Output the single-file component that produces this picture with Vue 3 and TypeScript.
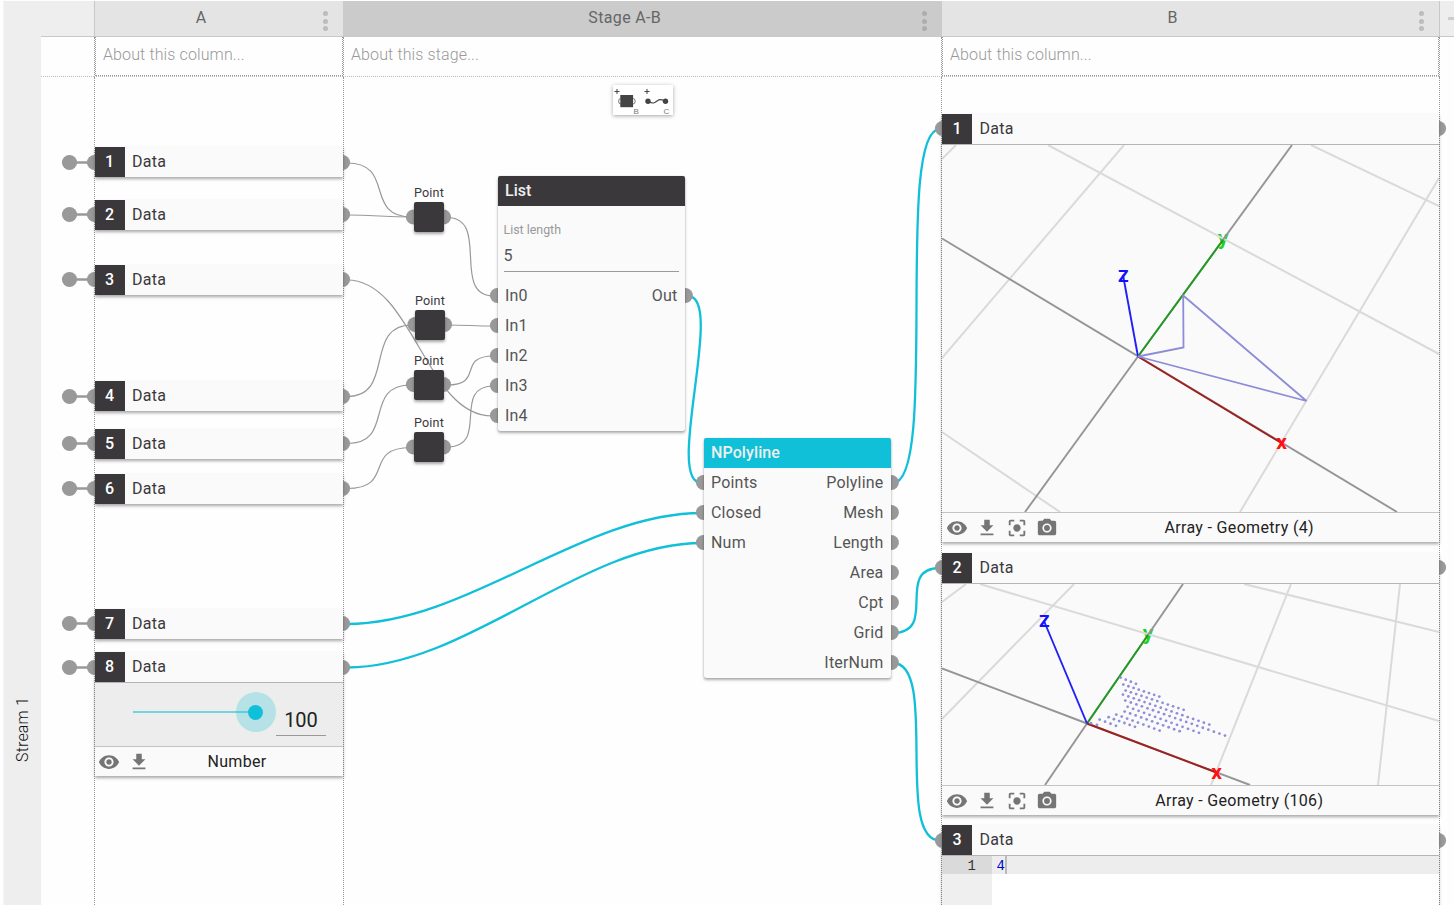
<script setup lang="ts">
interface Wire { from: [number, number]; to: [number, number]; bend: number; active?: boolean }
interface Cell { id: number; gap: number; portY: number; slider?: boolean }
interface Line { a: [number, number]; b: [number, number]; kind: string }

const cells: Cell[] = [
  { id: 1, gap: 70, portY: 162.5 },
  { id: 2, gap: 23, portY: 214.5 },
  { id: 3, gap: 35, portY: 279.5 },
  { id: 4, gap: 86, portY: 396.5 },
  { id: 5, gap: 18, portY: 443.5 },
  { id: 6, gap: 15, portY: 488.5 },
  { id: 7, gap: 105, portY: 623.5 },
  { id: 8, gap: 13, portY: 667.5, slider: true },
]

const wires: Wire[] = [
  { from: [347, 163], to: [412, 217], bend: 49 },
  { from: [347, 215], to: [412, 217], bend: 30 },
  { from: [347, 280], to: [492, 416], bend: 66 },
  { from: [347, 396.5], to: [412, 325], bend: 49 },
  { from: [347, 443.5], to: [411, 385], bend: 49 },
  { from: [347, 488.5], to: [411, 447.5], bend: 49 },
  { from: [447, 217.5], to: [494, 296], bend: 44 },
  { from: [447, 325], to: [494, 326], bend: 20 },
  { from: [447, 385], to: [494, 356], bend: 38 },
  { from: [447, 447], to: [494, 386], bend: 44 },
  { from: [688, 296], to: [701.5, 483], bend: 38, active: true },
  { from: [347, 624], to: [702, 513], bend: 120, active: true },
  { from: [347, 667.5], to: [702, 543], bend: 120, active: true },
  { from: [893, 483], to: [940, 129], bend: 46, active: true },
  { from: [893, 633], to: [940, 568], bend: 46, active: true },
  { from: [893, 663], to: [940, 840.5], bend: 46, active: true },
]

const wirePath = (w: Wire): string =>
  `M${w.from[0]} ${w.from[1]} C${w.from[0] + w.bend} ${w.from[1]} ${w.to[0] - w.bend} ${w.to[1]} ${w.to[0]} ${w.to[1]}`

const ports: [number, number][] = [
  ...cells.flatMap((c): [number, number][] => [[69.5, c.portY], [94.5, c.portY], [342.5, c.portY]]),
  [413.5, 217], [443.5, 217],
  [415, 324.5], [444.5, 324.5],
  [413.5, 384.5], [443.5, 384.5],
  [413.5, 447], [443.5, 447],
  ...[0, 1, 2, 3, 4].map((i): [number, number] => [497.5, 295.5 + i * 30]),
  [685.3, 295.5],
  ...[0, 1, 2].map((i): [number, number] => [703.5, 482.5 + i * 30]),
  ...[0, 1, 2, 3, 4, 5, 6].map((i): [number, number] => [891.3, 482.5 + i * 30]),
  ...[128.5, 567.5, 840.5].flatMap((y): [number, number][] => [[942.5, y], [1438.5, y]]),
]

const points = [
  { x: 414, y: 202 },
  { x: 415, y: 310 },
  { x: 414, y: 370 },
  { x: 414, y: 432 },
]

const polyOut = ['Polyline', 'Mesh', 'Length', 'Area', 'Cpt', 'Grid', 'IterNum']
const polyIn = ['Points', 'Closed', 'Num']

const sceneOne: Line[] = [
  { a: [0, 14], b: [14, 0], kind: 'grid' },
  { a: [106, 0], b: [497, 209], kind: 'grid' },
  { a: [182, 0], b: [0, 213], kind: 'grid' },
  { a: [369, 0], b: [497, 61], kind: 'grid' },
  { a: [497, 33], b: [298, 367], kind: 'grid' },
  { a: [0, 287], b: [118, 367], kind: 'grid' },
  { a: [0, 93.5], b: [455, 367], kind: 'main' },
  { a: [350, 0], b: [196, 211.5], kind: 'main' },
  { a: [196, 211.5], b: [83, 367], kind: 'main' },
  { a: [196, 211.5], b: [281, 95], kind: 'y' },
  { a: [196, 211.5], b: [339.5, 298], kind: 'x' },
  { a: [196, 211.5], b: [181, 130], kind: 'z' },
]

const sceneTwo: Line[] = [
  { a: [0, 18], b: [24, 0], kind: 'grid' },
  { a: [38, 0], b: [497, 137], kind: 'grid' },
  { a: [132, 0], b: [0, 135], kind: 'grid' },
  { a: [302, 0], b: [497, 48], kind: 'grid' },
  { a: [349, 0], b: [269, 201], kind: 'grid' },
  { a: [458, 0], b: [436, 201], kind: 'grid' },
  { a: [0, 84.5], b: [145, 139.5], kind: 'main' },
  { a: [145, 139.5], b: [308, 201], kind: 'main' },
  { a: [241, 0], b: [145, 139.5], kind: 'main' },
  { a: [145, 139.5], b: [103, 201], kind: 'main' },
  { a: [145, 139.5], b: [206, 51], kind: 'y' },
  { a: [145, 139.5], b: [274.5, 188.5], kind: 'x' },
  { a: [145, 139.5], b: [102, 37], kind: 'z' },
]

// Each run: first dot, last dot, number of dots.
const runs: [number, number, number, number, number][] = [
  [571, 322, 617, 341, 4],
  [579, 343, 687, 379, 8],
  [586, 361, 760, 419, 12],
  [578, 373, 837, 463, 17],
  [585, 391, 884, 496, 19],
  [592, 410, 806, 488, 14],
  [583, 424, 748, 483, 11],
  [558, 433, 688, 481, 9],
  [535, 441, 614, 470, 6],
  [508, 448, 557, 467, 4],
  [482, 459, 500, 464, 2],
]
const dots = runs.flatMap(([x0, y0, x1, y1, n]) =>
  Array.from({ length: n }, (_, i) => ({
    x: (x0 + ((x1 - x0) * i) / (n - 1)) / 3 - 11.7,
    y: (y0 + ((y1 - y0) * i) / (n - 1)) / 3 - 13.8,
  })),
)

const icons: Record<string, string> = {
  eye: 'M12 4.5C7 4.5 2.73 7.61 1 12c1.73 4.39 6 7.5 11 7.5s9.27-3.11 11-7.5c-1.73-4.39-6-7.5-11-7.5zM12 17c-2.76 0-5-2.24-5-5s2.24-5 5-5 5 2.24 5 5-2.24 5-5 5zm0-8c-1.66 0-3 1.34-3 3s1.34 3 3 3 3-1.34 3-3-1.34-3-3-3z',
  download: 'M19 9h-4V3H9v6H5l7 7 7-7zM5 18v2h14v-2H5z',
  focus: 'M12 8c-2.21 0-4 1.79-4 4s1.79 4 4 4 4-1.79 4-4-1.79-4-4-4zm-7 7H3v4c0 1.1.9 2 2 2h4v-2H5v-4zM5 5h4V3H5c-1.1 0-2 .9-2 2v4h2V5zm14-2h-4v2h4v4h2V5c0-1.1-.9-2-2-2zm0 16h-4v2h4c1.1 0 2-.9 2-2v-4h-2v4z',
  camera: 'M12 8.8a3.2 3.2 0 1 0 0 6.4 3.2 3.2 0 0 0 0-6.4zM9 2L7.17 4H4c-1.1 0-2 .9-2 2v12c0 1.1.9 2 2 2h16c1.1 0 2-.9 2-2V6c0-1.1-.9-2-2-2h-3.17L15 2H9zm3 15c-2.76 0-5-2.24-5-5s2.24-5 5-5 5 2.24 5 5-2.24 5-5 5z',
}
const numberTools = ['eye', 'download']
const geometryTools = ['eye', 'download', 'focus', 'camera']
</script>

<template>
  <div class="app">
    <aside class="stream"><span>Stream 1</span></aside>
    <main class="sheet">
      <header class="heads">
        <div class="gutter"></div>
        <div class="head col-a"><span>A</span><i class="menu"><b></b><b></b><b></b></i></div>
        <div class="head stage-head"><span>Stage A-B</span><i class="menu"><b></b><b></b><b></b></i></div>
        <div class="head col-b"><span>B</span><i class="menu"><b></b><b></b><b></b></i></div>
        <div class="tail"><i></i></div>
      </header>

      <section class="abouts">
        <div class="gutter"></div>
        <div class="col-a"><p class="boxed">About this column...</p></div>
        <div class="stage"><p>About this stage...</p></div>
        <div class="col-b"><p class="boxed">About this column...</p></div>
        <div class="rest"></div>
      </section>

      <section class="board">
        <div class="gutter"></div>
        <div class="col-a">
          <article v-for="c in cells" :key="c.id" class="card" :style="{ marginTop: c.gap + 'px' }">
            <div class="title"><b>{{ c.id }}</b><span>Data</span></div>
            <template v-if="c.slider">
              <div class="slider">
                <div class="track"><i class="halo"><i class="thumb"></i></i></div>
                <div class="value">100</div>
              </div>
              <footer class="foot narrow">
                <svg v-for="n in numberTools" :key="n" viewBox="0 0 24 24"><path :d="icons[n]" /></svg>
                <span>Number</span>
              </footer>
            </template>
          </article>
        </div>
        <div class="stage"></div>
        <div class="col-b">
          <article class="card first">
            <div class="title"><b>1</b><span>Data</span></div>
            <svg class="scene tall" viewBox="0 0 497 367">
              <text class="ty" x="281" y="99.8">y</text>
              <line v-for="(l, i) in sceneOne" :key="i" :class="l.kind" :x1="l.a[0]" :y1="l.a[1]" :x2="l.b[0]" :y2="l.b[1]" />
              <path class="shape" d="M196 211.5L241.5 202.5L241.2 150.5L364.5 256Z" />
              <text class="tx" x="339.7" y="304">x</text>
              <text class="tz" x="181.2" y="136.7">z</text>
            </svg>
            <footer class="foot">
              <svg v-for="n in geometryTools" :key="n" viewBox="0 0 24 24"><path :d="icons[n]" /></svg>
              <span>Array - Geometry (4)</span>
            </footer>
          </article>
          <article class="card second">
            <div class="title"><b>2</b><span>Data</span></div>
            <svg class="scene short" viewBox="0 0 497 201">
              <text class="ty" x="206" y="56">y</text>
              <line v-for="(l, i) in sceneTwo" :key="i" :class="l.kind" :x1="l.a[0]" :y1="l.a[1]" :x2="l.b[0]" :y2="l.b[1]" />
              <circle v-for="(d, i) in dots" :key="'d' + i" class="dot" :cx="d.x" :cy="d.y" r="1.4" />
              <text class="tx" x="274.7" y="194.8">x</text>
              <text class="tz" x="102.3" y="42.7">z</text>
            </svg>
            <footer class="foot">
              <svg v-for="n in geometryTools" :key="n" viewBox="0 0 24 24"><path :d="icons[n]" /></svg>
              <span>Array - Geometry (106)</span>
            </footer>
          </article>
          <article class="card third">
            <div class="title"><b>3</b><span>Data</span></div>
            <div class="editor">
              <div class="lines"><span>1</span></div>
              <div class="code"><span>4</span></div>
            </div>
          </article>
        </div>
        <div class="rest"></div>
      </section>
    </main>

    <svg class="wires" viewBox="0 0 1454 905">
      <path v-for="(w, i) in wires" :key="i" :class="{ active: w.active }" :d="wirePath(w)" />
      <line v-for="c in cells" :key="'l' + c.id" x1="70" x2="94" :y1="c.portY" :y2="c.portY" />
      <circle v-for="(p, i) in ports" :key="'p' + i" :cx="p[0]" :cy="p[1]" r="7.6" />
    </svg>

    <div class="toolbar">
      <svg viewBox="0 0 60 30">
        <path class="plus" d="M1.5 6.5h5M4 4v5M31.5 6.5h5M34 4v5" />
        <ellipse class="ring" cx="7.6" cy="16.2" rx="2" ry="2.7" />
        <ellipse class="ring" cx="20.2" cy="16.2" rx="2" ry="2.7" />
        <rect x="7.3" y="10" width="12.8" height="12.2" />
        <circle cx="35" cy="16.2" r="2.7" />
        <circle cx="52.5" cy="16.2" r="2.7" />
        <path class="link" d="M35 16.2C41 19.5 42 17.5 44 16C47 14 48 14.5 52.5 16.2" />
        <text x="20.6" y="29">B</text>
        <text x="50.6" y="29">C</text>
      </svg>
    </div>

    <div v-for="(p, i) in points" :key="i" class="point" :style="{ left: p.x + 'px', top: p.y + 'px' }">
      <span>Point</span>
    </div>

    <section class="node list">
      <h3>List</h3>
      <div class="field"><label>List length</label><span>5</span></div>
      <div v-for="i in 5" :key="i" class="pins"><span>In{{ i - 1 }}</span><span v-if="i === 1">Out</span></div>
    </section>

    <section class="node poly">
      <h3>NPolyline</h3>
      <div v-for="(o, i) in polyOut" :key="o" class="pins"><span>{{ polyIn[i] }}</span><span>{{ o }}</span></div>
    </section>
  </div>
</template>

<style>
body { margin: 0; background: #fff; overflow: hidden; }
</style>

<style scoped>
* { box-sizing: border-box; }
.app {
  position: relative;
  width: 1454px;
  height: 905px;
  overflow: hidden;
  display: flex;
  padding: 1px 0 0 3px;
  background: #fefefe;
  font: 400 16px/20px Roboto, sans-serif;
  color: #3b383b;
}
.stream {
  width: 38px;
  background: #eee;
  border-left: 1px solid #f4f4f4;
  display: flex;
  align-items: flex-end;
  justify-content: center;
  padding-bottom: 143px;
}
.stream span { writing-mode: vertical-rl; transform: rotate(180deg); font-weight: 300; color: #111; letter-spacing: .15px; }
.sheet { flex: 1; display: flex; flex-direction: column; min-width: 0; }
.heads, .abouts, .board { display: flex; }
.heads { height: 36px; background: #eee; }
.gutter { width: 53px; flex: none; }
.col-a { width: 249px; flex: none; }
.stage, .stage-head { width: 599px; flex: none; }
.col-b { width: 497px; flex: none; }
.heads .gutter, .heads .tail { border-bottom: 1px solid #c8c8c8; }
.head {
  display: flex;
  align-items: flex-start;
  padding-top: 7px;
  background: #e4e4e4;
  border-bottom: 1px solid #c8c8c8;
  color: #666;
}
.head.col-a { border-left: 1px solid #c8c8c8; }
.head.stage-head { background: #cbcbcb; }
.head span { flex: 1; text-align: center; letter-spacing: .35px; }
.menu { width: 35.5px; display: flex; flex-direction: column; align-items: center; gap: 2.5px; padding-top: 3px; }
.menu b { width: 5px; height: 5px; border-radius: 50%; background: #bcbcbc; }
.stage-head .menu b { background: #adadad; }
.tail { flex: 1; border-left: 1px solid #c8c8c8; padding: 16px 0 0 8px; }
.tail i { display: block; height: 3px; background: #ccc; }

.abouts { height: 40px; }
.abouts .gutter, .abouts .col-a, .abouts .stage, .abouts .col-b { border-bottom: 1px dotted #bbb; }
.abouts .col-a, .board .col-a { border-left: 1px dotted #999; }
.abouts .stage, .board .stage { border-left: 1px dotted #999; border-right: 1px dotted #999; }
.rest { flex: 1; border-left: 1px dotted #999; }
.abouts p { margin: 0; height: 39px; padding: 8px 8px 0 7px; font-weight: 300; color: #999; letter-spacing: .12px; }
.abouts .boxed { border: 1px dotted #999; border-top: 0; }
.board { flex: 1; min-height: 0; }

.card { position: relative; z-index: 1; background: #fafafa; box-shadow: 0 2px 3px rgba(0, 0, 0, .34); }
.title { height: 30px; display: flex; align-items: center; }
.title b { width: 30px; height: 30px; background: #3b383b; color: #fff; font-weight: 500; text-align: center; line-height: 29px; padding-right: 1px; }
.col-b .title b { padding-right: 0; }
.title span { padding-left: 7px; line-height: 29px; height: 30px; letter-spacing: .25px; }
.col-b .title span { padding-left: 7.5px; }
.first { margin-top: 37px; }
.second { margin-top: 11px; }
.third { margin-top: 10px; height: 120px; background: #fff; }
.third .title { background: #fafafa; }
.foot { display: flex; height: 30px; border-top: 1px solid #c4c4c4; padding-right: 22.5px; align-items: center; }
.foot svg { width: 22px; height: 22px; margin: 1px 4px 0; fill: #757575; }
.foot.narrow { padding-right: 24px; }
.foot.narrow svg { margin: 1px 4.6px 0 3.4px; }
.foot span { flex: 1; text-align: center; color: #222; letter-spacing: .33px; }
.slider { display: flex; height: 64px; border-top: 1px solid #b4b4b4; background: #ededed; padding-left: 38px; }
.track { position: relative; width: 123px; height: 2px; margin-top: 28px; background: #74d3de; }
.halo { position: absolute; right: -20px; top: -19px; width: 40px; height: 40px; border-radius: 50%; background: rgba(16, 192, 216, .25); }
.thumb { position: absolute; left: 12px; top: 13px; width: 15px; height: 15px; border-radius: 50%; background: #10c0d8; }
.value { width: 50px; height: 27px; margin: 26px 0 0 20px; border-bottom: 1px solid #999; text-align: center; font-size: 20px; line-height: 23px; color: #222; }

.scene { display: block; width: 497px; box-sizing: content-box; border-top: 1px solid #b4b4b4; }
.tall { height: 367px; }
.short { height: 201px; }
.scene line { stroke-width: 1.9; }
.grid { stroke: #dadada; }
.scene .grid { stroke-width: 2; }
.main { stroke: #959595; }
.x { stroke: #a02020; }
.y { stroke: #209a20; }
.z { stroke: #2020f8; }
.shape { fill: none; stroke: #8c8cd8; stroke-width: 1.8; }
.dot { fill: #8e8eda; }
.scene text { font: 700 21px Roboto, sans-serif; text-anchor: middle; }
.scene .tx { fill: #f11; }
.scene .ty { fill: #1cd41c; }
.scene .tz { fill: #11f; font-weight: 500; font-size: 22px; }

.editor { display: flex; border-top: 1px solid #b4b4b4; height: 89px; font: 14px/20px "Liberation Mono", monospace; }
.lines { width: 50px; background: #efefef; }
.lines span { display: block; height: 18px; background: #dadada; text-align: right; padding-right: 16px; color: #333; }
.code { flex: 1; background: linear-gradient(#ededed 18px, #fff 18px); padding-left: 4.6px; }
.code span { display: block; width: 10px; height: 18px; border-right: 2px solid #bbb; color: #0000cd; }

.wires { position: absolute; left: 0; top: 0; width: 1454px; height: 905px; }
.wires path { fill: none; stroke: #999; stroke-width: 1.2; }
.wires path.active { stroke: #10c0d8; stroke-width: 2.3; }
.wires line { stroke: #999; stroke-width: 2.5; }
.wires circle { fill: #999; }

.toolbar { position: absolute; left: 613px; top: 85px; width: 60px; height: 30px; background: #fff; box-shadow: 0 1px 4px rgba(0, 0, 0, .35); }
.toolbar svg { display: block; width: 60px; height: 30px; fill: #444; }
.toolbar .plus { stroke: #444; stroke-width: 1; }
.toolbar .ring { fill: #fff; stroke: #777; stroke-width: 1; }
.toolbar .link { fill: none; stroke: #444; stroke-width: 1.2; }
.toolbar text { font: 400 8px "Liberation Sans", sans-serif; fill: #777; }

.point { position: absolute; width: 30px; height: 30px; border-radius: 2px; background: #3b383b; box-shadow: 0 2px 3px rgba(0, 0, 0, .35); }
.point span { position: absolute; left: 0; top: -18px; width: 30px; font-size: 12.6px; letter-spacing: .2px; line-height: 18px; display: flex; justify-content: center; }

.node { position: absolute; width: 187px; border-radius: 2px; background: #fafafa; box-shadow: 0 2px 3px rgba(0, 0, 0, .32), 0 0 1px rgba(0, 0, 0, .3); color: #555; }
.node h3 { margin: 0; height: 30px; padding-left: 7px; border-radius: 2px 2px 0 0; background: #3b383b; color: #eee; font-size: 16px; font-weight: 500; line-height: 29px; }
.list { left: 498px; top: 176px; height: 255px; }
.poly { left: 704px; top: 438px; height: 240px; }
.poly h3 { background: #10c0d8; letter-spacing: .1px; }
.field { height: 66px; margin: 0 6px 9px 5.5px; border-bottom: 1px solid #999; display: flex; flex-direction: column; padding-top: 14px; }
.field label { font-size: 12.4px; color: #999; }
.field span { margin-top: 6px; }
.pins { display: flex; justify-content: space-between; height: 30px; padding: 0 7.5px 0 7px; line-height: 29px; letter-spacing: .2px; }
</style>
